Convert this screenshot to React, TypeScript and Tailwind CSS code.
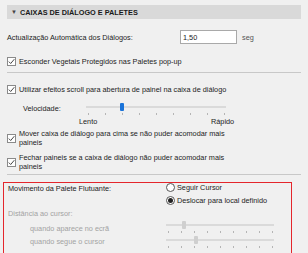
import React from "react";

function Check() {
  return (
    <span className="inline-flex h-[9px] w-[9px] shrink-0 items-center justify-center border border-[#8a8a8a] bg-white">
      <svg width="7" height="7" viewBox="0 0 7 7">
        <path d="M0.8 3.6 L2.7 5.5 L6.3 1.2" fill="none" stroke="#333" strokeWidth="0.9" />
      </svg>
    </span>
  );
}

function Radio({ on }: { on?: boolean }) {
  return (
    <span className="inline-flex h-[9px] w-[9px] shrink-0 items-center justify-center rounded-full border border-[#555] bg-white">
      {on && <span className="h-[5px] w-[5px] rounded-full bg-[#222]" />}
    </span>
  );
}

function Slider({ width, thumb, step, count, active }: { width: number; thumb: number; step: number; count: number; active?: boolean }) {
  return (
    <div className="relative h-[12px]" style={{ width }}>
      <div className="absolute left-0 right-0 top-[3px] h-[2px] bg-[#dadada]" />
      <div
        className={`absolute top-0 h-[8px] w-[4px] rounded-[1px] ${active ? "bg-[#1a73d9]" : "bg-[#cfcfcf]"}`}
        style={{ left: thumb }}
      />
      {Array.from({ length: count }).map((_, i) => (
        <div key={i} className="absolute top-[10px] h-[2px] w-px bg-[#b5b5b5]" style={{ left: 2 + i * step }} />
      ))}
    </div>
  );
}

export default function App() {
  return (
    <div
      className="h-[253px] w-[308px] overflow-hidden bg-[#f0f0f0] text-[7.3px] leading-[9px] text-[#1c1c1c]"
      style={{ fontFamily: '"Liberation Sans", Arial, sans-serif' }}
    >
      <div className="mx-[7px] mt-[5px] flex h-[14px] items-center gap-[3px] bg-[#d9d9d9] pl-[4px]">
        <span className="text-[6px] text-[#444]">▼</span>
        <span className="font-bold text-[#1a1a1a]">CAIXAS DE DIÁLOGO E PALETES</span>
      </div>

      <div className="ml-[7px] mt-[11px] flex h-[14px] items-center">
        <span className="w-[173px]">Actualização Automática dos Diálogos:</span>
        <div className="flex h-[14px] w-[57px] items-center border border-[#a9a9a9] bg-white pl-[2px]">1,50</div>
        <span className="ml-[5px] text-[#555]">seg</span>
      </div>

      <div className="ml-[7px] mt-[13px] flex items-center gap-[3px]">
        <Check />
        <span>Esconder Vegetais Protegidos nas Paletes pop-up</span>
      </div>

      <div className="mx-[7px] mt-[6px] border-t border-[#c8c8c8]" />

      <div className="ml-[7px] mt-[12px] flex items-center gap-[3px]">
        <Check />
        <span>Utilizar efeitos scroll para abertura de painel na caixa de diálogo</span>
      </div>

      <div className="ml-[23px] mt-[9px] flex items-start">
        <span className="w-[63px] pt-[1px]">Velocidade:</span>
        <Slider width={140} thumb={34} step={17} count={9} active />
      </div>
      <div className="mt-[2px] flex">
        <span className="ml-[79px] w-[132px]">Lento</span>
        <span>Rápido</span>
      </div>

      <div className="ml-[7px] mt-[3px] flex items-center gap-[3px]">
        <Check />
        <span>
          Mover caixa de diálogo para cima se não puder acomodar mais
          <br />
          paineis
        </span>
      </div>

      <div className="ml-[7px] mt-[6px] flex items-center gap-[3px]">
        <Check />
        <span>
          Fechar paineis se a caixa de diálogo não puder acomodar mais
          <br />
          paineis
        </span>
      </div>

      <div className="mx-[7px] mt-[3px] border-t border-[#c8c8c8]" />

      <div className="ml-[3px] mt-[7px] h-[80px] w-[289px] border-[1.5px] border-[#e4262c] pl-[4px]">
        <div className="flex">
          <span className="w-[158px] pt-[1px]">Movimento da Palete Flutuante:</span>
          <div className="flex flex-col gap-[4px]">
            <div className="flex items-center gap-[2px]">
              <Radio />
              <span>Seguir Cursor</span>
            </div>
            <div className="flex items-center gap-[2px]">
              <Radio on />
              <span>Deslocar para local definido</span>
            </div>
          </div>
        </div>
        <div className="mt-[3.5px] text-[#a3a3a3]">Distância ao cursor:</div>
        <div className="flex items-start">
          <div className="w-[158px] pl-[22px] text-[#a3a3a3]">
            <div className="mt-[6px]">quando aparece no ecrã</div>
            <div className="mt-[4px]">quando segue o cursor</div>
          </div>
          <div className="mt-[3.5px] flex flex-col gap-[3px]">
            <Slider width={108} thumb={16} step={13} count={9} />
            <Slider width={108} thumb={28} step={13} count={9} />
          </div>
        </div>
      </div>
    </div>
  );
}
